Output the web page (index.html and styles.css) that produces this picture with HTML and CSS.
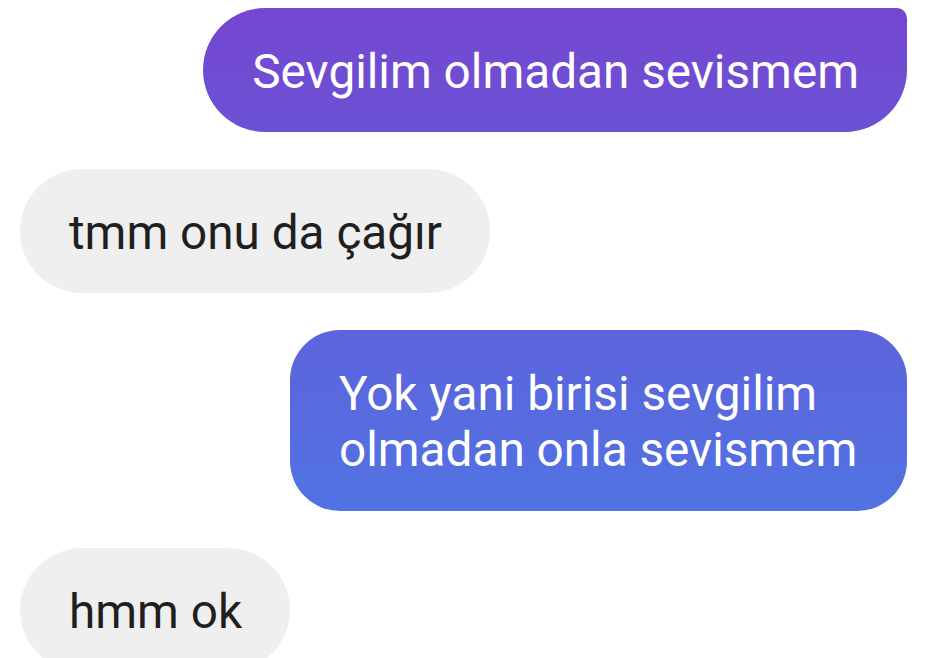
FILE: index.html
```html
<!DOCTYPE html>
<html lang="tr">
<head>
<meta charset="utf-8">
<title>Sohbet</title>
<link rel="stylesheet" href="styles.css">
</head>
<body>
<main class="thread">
  <div class="msg msg-out msg-first">Sevgilim olmadan sevismem</div>
  <div class="msg msg-in">tmm onu da çağır</div>
  <div class="msg msg-out msg-wide">Yok yani birisi sevgilim olmadan onla sevismem</div>
  <div class="msg msg-in">hmm ok</div>
</main>
</body>
</html>
```

FILE: styles.css
```css
html, body {
  margin: 0;
  padding: 0;
  background: #ffffff;
  height: 100%;
  overflow: hidden;
}

.thread {
  display: flex;
  flex-direction: column;
  gap: 37px;
  padding: 8px 25px 0 20px;
  font-family: Roboto, "Noto Sans", sans-serif;
  font-size: 47.7px;
  line-height: 56px;
}

.msg {
  padding: 36px 48px 32px 49px;
  border-radius: 62px;
  white-space: nowrap;
}

.msg-out {
  align-self: flex-end;
  color: #ffffff;
  background: linear-gradient(180deg, #7546cf 0%, #4680e8 658px) fixed;
}

.msg-first {
  border-top-right-radius: 10px;
}

.msg-wide {
  border-radius: 50px;
  white-space: normal;
  max-width: 520px;
  padding-bottom: 33px;
}

.msg-in {
  align-self: flex-start;
  color: #1f1f1f;
  background: #efefef;
}
```
